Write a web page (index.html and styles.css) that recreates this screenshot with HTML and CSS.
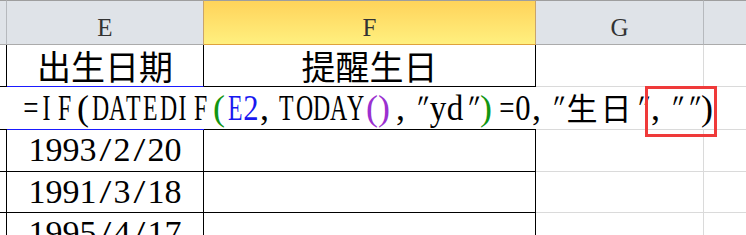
FILE: index.html
```html
<!DOCTYPE html>
<html lang="zh-CN">
<head>
<meta charset="utf-8">
<title>提醒生日</title>
<link rel="stylesheet" href="styles.css">
</head>
<body>
<div class="sheet">
  <div class="grid">
    <div class="cell hd hD"></div>
    <div class="cell hd hE">E</div>
    <div class="cell hd hF">F</div>
    <div class="cell hd hG">G</div>
    <div class="cell hd hH"></div>

    <div class="cell bk"></div>
    <div class="cell bk sel-b cj-cell">出生日期</div>
    <div class="cell bk cj-cell">提醒生日</div>
    <div class="cell gr"></div>
    <div class="cell grb"></div>

    <div class="cell nob bkb"></div>
    <div class="cell nob sel-b formula"><span class="s eq">=</span><span class="s u">I</span><span class="s u">F</span><span class="s pl">(</span><span class="s u">D</span><span class="s u">A</span><span class="s u">T</span><span class="s u">E</span><span class="s u">D</span><span class="s u">I</span><span class="s u">F</span><span class="s pl g">(</span><span class="s u b">E</span><span class="s dg b">2</span><span class="s cm">,</span><span class="s u">T</span><span class="s u">O</span><span class="s u">D</span><span class="s u">A</span><span class="s u">Y</span><span class="s pl p">(</span><span class="s pr p">)</span><span class="s cm">,</span><span class="s q">"</span><span class="s lw">y</span><span class="s lw">d</span><span class="s q">"</span><span class="s pr g">)</span><span class="s eq">=</span><span class="s dg">0</span><span class="s cm">,</span><span class="s q">"</span><span class="s cj">生</span><span class="s cj">日</span><span class="s q">"</span><span class="s cm">,</span><span class="s q">"</span><span class="s q">"</span><span class="s pr">)</span></div>
    <div class="cell nob bkb"></div>
    <div class="cell nob grb"></div>
    <div class="cell nob grb"></div>

    <div class="cell bk"></div>
    <div class="cell bk date"><span class="s">1</span><span class="s">9</span><span class="s">9</span><span class="s">3</span><span class="s sl">/</span><span class="s">2</span><span class="s sl">/</span><span class="s">2</span><span class="s">0</span></div>
    <div class="cell bk"></div>
    <div class="cell gr"></div>
    <div class="cell grb"></div>

    <div class="cell bk"></div>
    <div class="cell bk date"><span class="s">1</span><span class="s">9</span><span class="s">9</span><span class="s">1</span><span class="s sl">/</span><span class="s">3</span><span class="s sl">/</span><span class="s">1</span><span class="s">8</span></div>
    <div class="cell bk"></div>
    <div class="cell gr"></div>
    <div class="cell grb"></div>

    <div class="cell bk"></div>
    <div class="cell bk date"><span class="s">1</span><span class="s">9</span><span class="s">9</span><span class="s">5</span><span class="s sl">/</span><span class="s">4</span><span class="s sl">/</span><span class="s">1</span><span class="s">7</span></div>
    <div class="cell bk"></div>
    <div class="cell gr"></div>
    <div class="cell grb"></div>
  </div>
  <div class="highlight"></div>
</div>
</body>
</html>
```

FILE: styles.css
```css
html, body {
  margin: 0;
  padding: 0;
  background: #ffffff;
}

.sheet {
  position: relative;
  width: 746px;
  height: 235px;
  overflow: hidden;
  font-family: "Liberation Serif", "Noto Sans CJK SC", serif;
  color: #000;
}

.grid {
  display: grid;
  grid-template-columns: 7px 197px 332px 168px 1fr;
  grid-template-rows: 45px 42px 43px 42px 41px 42px;
}

.cell {
  box-sizing: border-box;
  white-space: nowrap;
  min-width: 0;
}

/* column headers */
.hd {
  background: #dfe3e8;
  border-top: 1px solid #9e9e9e;
  border-bottom: 1px solid #ababab;
  border-right: 1px solid #b6b9bd;
  font-size: 25px;
  line-height: 24px;
  padding-top: 15px;
  text-align: center;
  color: #333;
}
.hE { border-right-color: #c9a46c; }
.hF {
  background: linear-gradient(#ffd35a, #fff07f);
  border-bottom-color: #dfa23c;
  border-right-color: #c9a46c;
}
.hH { border-right: none; }

/* body cells */
.bk {
  border-right: 1px solid #000;
  border-bottom: 1px solid #000;
}
.gr {
  border-right: 1px solid #dadada;
  border-bottom: 1px solid #dadada;
}
.grb { border-bottom: 1px solid #dadada; }
.bkb { border-bottom: 1px solid #000; }
.sel-b { border-bottom-color: #1a1aff; }
.nob.sel-b { border-bottom: 1px solid #1a1aff; }

.cj-cell {
  display: flex;
  align-items: center;
  justify-content: center;
  font-family: "Noto Sans CJK SC", sans-serif;
  font-size: 34px;
  line-height: 34px;
}

/* formula overflowing across the row */
.formula {
  font-size: 36px;
  line-height: 42px;
  padding-left: 14px;
  overflow: visible;
}

.s {
  display: inline-block;
  width: 17px;
  text-align: center;
}
.u { transform: scaleX(0.66); }
.dg { transform: scaleX(0.85); }
.lw { transform: scaleX(0.92); }
.eq { transform: scaleX(0.75); }
.pl { text-align: right; }
.pr { text-align: left; }
.cm { text-align: left; text-indent: 1px; }
.q { transform: scaleX(0.8) skewX(-22deg); }
.formula .cj {
  width: 34px;
  font-family: "Noto Sans CJK SC", sans-serif;
  font-size: 31px;
  line-height: 1;
}

.g { color: #129612; }
.b { color: #1818f0; }
.p { color: #9b30d0; }

/* dates */
.date {
  font-size: 34px;
  line-height: 40px;
  text-align: center;
}
.sl { transform: scaleX(1.25); }

/* red annotation box */
.highlight {
  position: absolute;
  left: 645px;
  top: 86px;
  width: 72px;
  height: 51px;
  box-sizing: border-box;
  border: 3px solid #ef3a3a;
}
```
